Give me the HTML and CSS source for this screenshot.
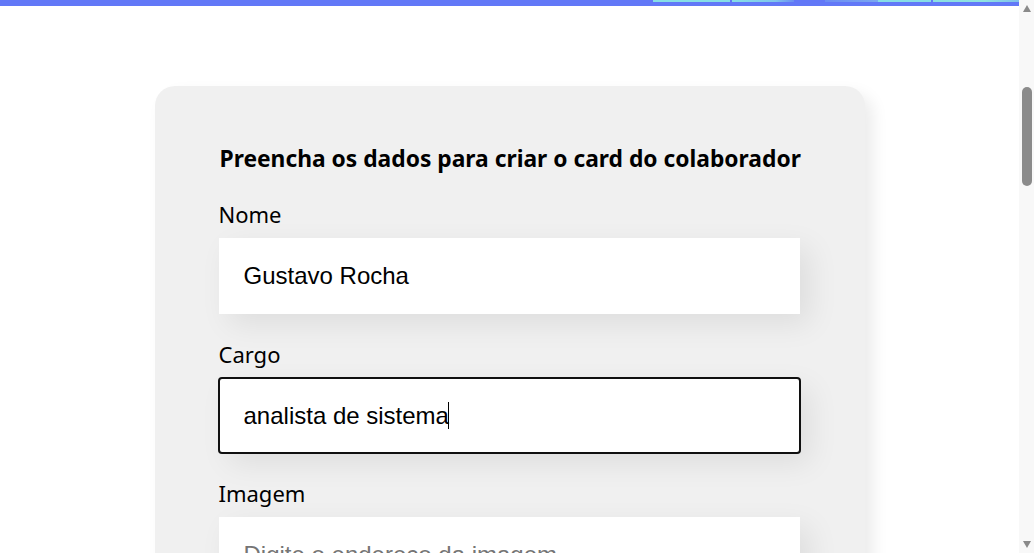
FILE: index.html
```html
<!DOCTYPE html>
<html lang="pt-BR">
<head>
<meta charset="utf-8">
<title>Organo</title>
<link rel="stylesheet" href="styles.css">
</head>
<body>
<div class="viewport">
  <header class="banner">
    <div class="banner-art">
      <span class="art art-1"></span>
      <span class="art art-2"></span>
      <span class="art art-3"></span>
      <span class="art art-4"></span>
      <span class="art art-5"></span>
    </div>
  </header>
  <section class="formulario">
    <form class="form-card">
      <h2 class="form-title">Preencha os dados para criar o card do colaborador</h2>
      <div class="campo-texto">
        <label class="campo-label">Nome</label>
        <input class="campo-input" type="text" value="Gustavo Rocha" placeholder="Digite seu nome">
      </div>
      <div class="campo-texto">
        <label class="campo-label">Cargo</label>
        <div class="input-wrap">
          <input class="campo-input is-focused" type="text" value="analista de sistema" placeholder="Digite seu cargo">
          <span class="caret"></span>
        </div>
      </div>
      <div class="campo-texto">
        <label class="campo-label">Imagem</label>
        <input class="campo-input" type="text" placeholder="Digite o endereço da imagem">
      </div>
      <div class="campo-texto">
        <label class="campo-label">Time</label>
        <select class="campo-input">
          <option>Programação</option>
        </select>
      </div>
      <button class="botao" type="button">Criar card</button>
    </form>
  </section>
  <section class="times">
    <h3 class="times-title">Minha organização</h3>
  </section>
</div>
<div class="scrollbar" aria-hidden="true">
  <div class="sb-btn"><span class="sb-arrow-up"></span></div>
  <div class="sb-track"><div class="sb-thumb"></div></div>
  <div class="sb-btn"><span class="sb-arrow-down"></span></div>
</div>
<script src="script.js"></script>
</body>
</html>
```

FILE: styles.css
```css
* {
  box-sizing: border-box;
}

html, body {
  margin: 0;
  padding: 0;
}

body {
  display: flex;
  height: 100vh;
  overflow: hidden;
  background: #ffffff;
  font-family: "Noto Sans", "Open Sans", sans-serif;
  color: #000;
}

.viewport {
  flex: 1 1 auto;
  height: 100%;
  overflow: hidden;
}

/* fake browser scrollbar */
.scrollbar {
  flex: 0 0 15px;
  height: 100%;
  background: #f8f8f8;
  display: flex;
  flex-direction: column;
}

.sb-btn {
  flex: 0 0 17px;
  display: flex;
  align-items: center;
  justify-content: center;
}

.sb-arrow-up {
  width: 0;
  height: 0;
  border-left: 4.5px solid transparent;
  border-right: 4.5px solid transparent;
  border-bottom: 7px solid #8a8a8a;
}

.sb-arrow-down {
  width: 0;
  height: 0;
  border-left: 4.5px solid transparent;
  border-right: 4.5px solid transparent;
  border-top: 7px solid #8a8a8a;
}

.sb-track {
  flex: 1 1 auto;
  padding: 70px 2px 0 3px;
}

.sb-thumb {
  height: 99px;
  border-radius: 5px;
  background: #8b8b8b;
}

.banner {
  background-color: #6278f7;
  height: 401px;
  display: flex;
  align-items: flex-start;
}

.banner-art {
  display: flex;
  height: 2px;
  margin-top: 395px;
  margin-left: 653px;
}

.art {
  height: 2px;
  display: block;
}

.art-1 { width: 77px; background: #86dfe6; }
.art-2 { width: 62px; margin-left: 2px; background: linear-gradient(90deg, #86dfe6, #7fc6ec 70%, #6a8ef2); }
.art-3 { width: 53px; margin-left: 31px; background: linear-gradient(90deg, #6b8cf3, #7aa8f0); }
.art-4 { width: 53px; background: #86dde6; }
.art-5 { width: 86px; margin-left: 2px; background: linear-gradient(90deg, #8adfe2, #8ee3e0 60%, #7fbfec); }

.formulario {
  display: flex;
  justify-content: center;
  margin: 80px 0;
}

.form-card {
  width: 710px;
  background-color: #f0f0f0;
  border-radius: 20px;
  padding: 36px 65px 36px 64px;
  box-shadow: 8px 8px 16px rgba(0, 0, 0, 0.08);
}

.form-title {
  font-size: 22.8px;
  line-height: 32px;
  font-weight: 700;
  margin: 21px 0 19px 1px;
  white-space: nowrap;
}

.campo-texto {
  margin: 24px 0;
}

.form-title + .campo-texto {
  margin-top: 23px;
}

.campo-label {
  display: block;
  font-size: 22px;
  line-height: 32px;
  margin-bottom: 8px;
}

.input-wrap {
  position: relative;
}

.campo-input {
  display: block;
  width: 100%;
  background-color: #ffffff;
  box-shadow: 10px 10px 30px rgba(0, 0, 0, 0.08);
  border: none;
  font-family: "Liberation Sans", Arial, sans-serif;
  font-size: 24px;
  line-height: 27.6px;
  padding: 24px 24px 24px 25px;
  color: #000;
  outline: none;
}

.campo-input::placeholder {
  color: #757575;
}

.campo-input.is-focused {
  outline: 2px solid #101010;
  outline-offset: -1px;
  border-radius: 3px;
}

.caret {
  position: absolute;
  left: 229px;
  top: 24px;
  width: 1px;
  height: 27px;
  background: #000;
}

.botao {
  font-size: 18px;
  font-weight: 700;
  padding: 32px;
  border-radius: 10px;
  border: none;
  background: #6278f7;
  color: #fff;
  margin: 32px 0 0;
  font-family: "Noto Sans", sans-serif;
}

.times {
  height: 1600px;
  text-align: center;
}

.times-title {
  font-size: 40px;
  color: #6278f7;
  margin: 0;
}
```

FILE: script.js
```js
document.querySelector('.viewport').scrollTop = 395;
```
